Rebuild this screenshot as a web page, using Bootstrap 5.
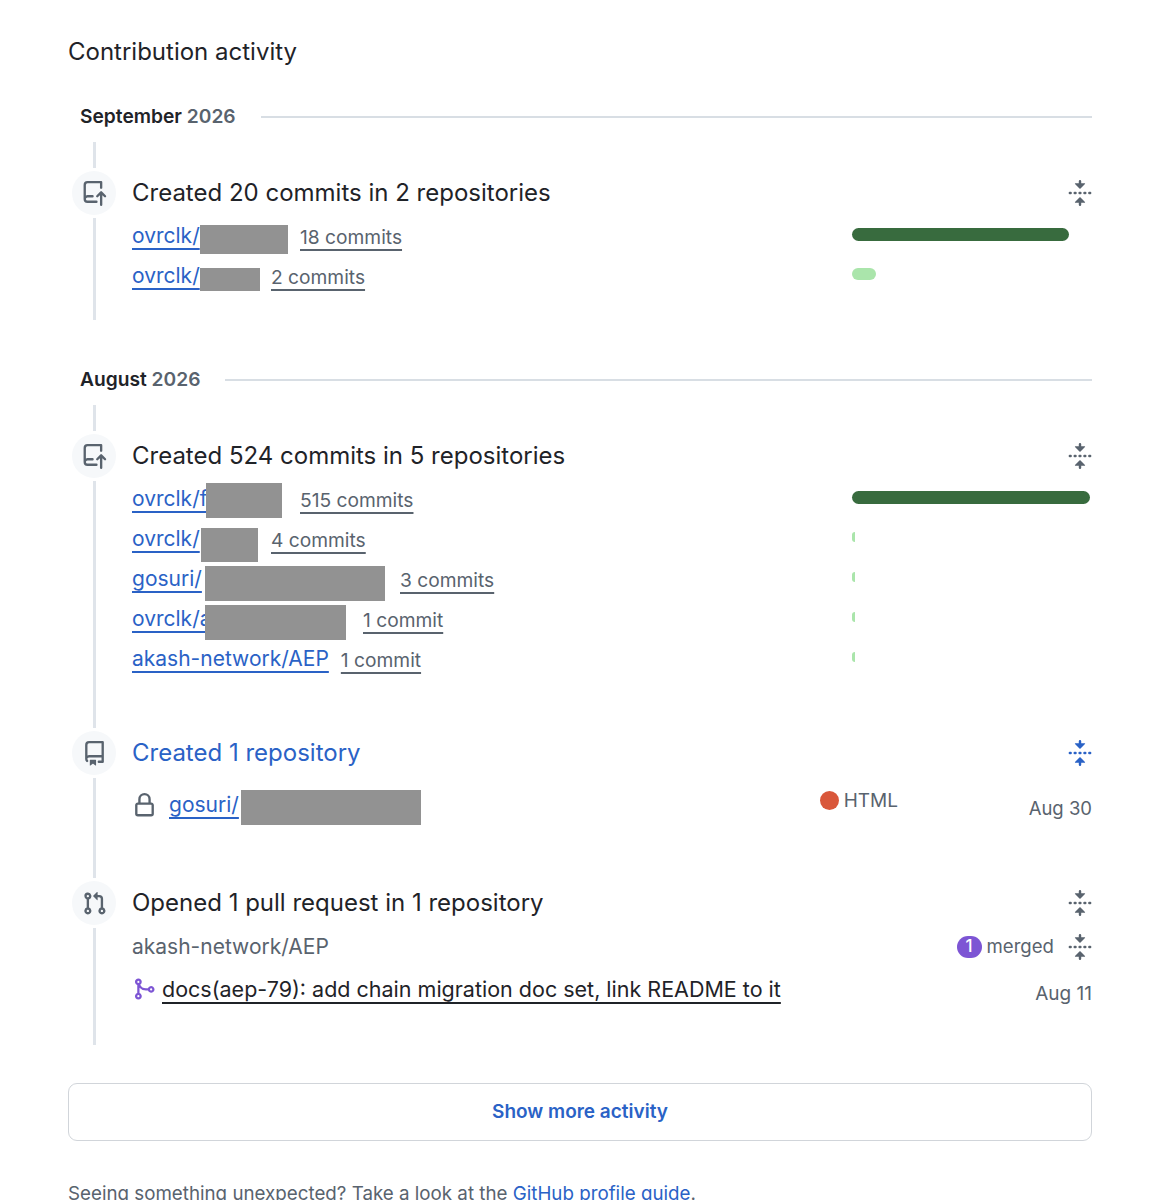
<!DOCTYPE html>
<html lang="en">
<head>
  <meta charset="UTF-8" />
  <title>Contribution activity</title>
  <link href="https://cdn.jsdelivr.net/npm/bootstrap@5.3.3/dist/css/bootstrap.min.css" rel="stylesheet">
  <style>
    html, body { height: 1200px; overflow: hidden; }
    body { font-family: Inter, "Liberation Sans", sans-serif; color: #1f2328; background: #fff; }
    a { color: #2a62c6; text-underline-offset: 5px; text-decoration-thickness: 1.5px; text-decoration-skip-ink: none; }
    .page-wrap { padding: 33px 58px 0 68px; }
    .page-title { font-size: 24px; font-weight: 400; line-height: 38px; margin: 0; }
    .month-head { height: 28px; margin: 31px 0 12px; padding: 1px 0 0 12px; font-size: 19.2px; font-weight: 600; }
    .month-head.later { margin-top: 45px; }
    .month-head .year { color: #59636e; }
    .month-head .rule { height: 2px; background: #d8dee4; margin-left: 25px; }
    .rail { width: 44px; margin: 0 16px 0 4px; }
    .rail-seg { width: 3px; background: #dfe4ea; }
    .rail-seg.top { height: 26px; }
    .rail-dot { width: 44px; height: 44px; margin: 3px 0; background: #f6f8fa; color: #59636e; }
    .rail-dot svg { width: 25px; height: 25px; }
    .entry-body { min-width: 0; }
    .entry-pad-a { padding: 29px 0 23px; }
    .entry-pad-b { padding: 29px 0 48px; }
    .entry-pad-c { padding: 3px 0 53px; }
    .entry-pad-d { padding: 3px 0 34px; }
    .entry-title { height: 44px; margin-bottom: 2px; font-size: 24px; }
    .entry-title a { text-decoration: none; }
    .fold-icon { width: 26px; height: 26px; margin-right: -1px; color: #59636e; flex: none; }
    .fold-icon.blue { color: #2a62c6; }
    .commit-row { height: 40px; font-size: 21px; }
    .repo-name { display: inline-block; white-space: nowrap; line-height: 32px; margin-bottom: 2px; flex: none; }
    .commit-count { color: #59636e; font-size: 19.2px; text-decoration-color: #59636e; margin-top: 1px; }
    .redact { background: #929292; flex: none; }
    .bar-col { width: 240px; }
    .bar-dark, .bar-light { border-radius: 7px; margin-bottom: 6px; }
    .bar-dark { height: 13px; background: #386b3e; }
    .bar-light { height: 12px; background: #aae5ab; }
    .bar-tiny { height: 10px; background: #aae5ab; border-radius: 5px 0 0 5px; margin-bottom: 6px; }
    .repo-row { height: 35px; margin-top: 15px; font-size: 21px; }
    .lock-icon { width: 25px; height: 25px; color: #59636e; margin: 0 12px 4px 0; flex: none; }
    .lang-col { width: 209px; color: #59636e; font-size: 19px; margin-bottom: 12px; }
    .lang-dot { width: 19px; height: 19px; background: #d9573a; margin: 0 5px 2px 0; }
    .when { color: #59636e; font-size: 18.5px; white-space: nowrap; margin-top: 2px; }
    .pr-repo { height: 40px; margin-top: 1px; color: #59636e; font-size: 21px; }
    .merged-pill { width: 25px; height: 22px; background: #7d55d4; color: #fff; font-size: 17px; font-weight: 500; margin-right: 5px; }
    .merged-txt { color: #59636e; font-size: 18.6px; margin-right: 13px; }
    .pr-row { height: 44px; font-size: 21.5px; }
    .pr-row a { color: #1f2328; text-decoration-color: #1f2328; }
    .pr-row .when { margin-top: 10px; font-size: 19px; }
    .merge-icon { width: 24px; height: 24px; color: #7d55d4; margin: 0 6px 0 0; flex: none; }
    .more-btn { height: 58px; margin-top: 38px; border: 1.5px solid #d1d5da; border-radius: 9px; color: #2a62c6; font-size: 19px; font-weight: 600; background: #fff; }
    .foot-note { margin-top: 41px; color: #59636e; font-size: 18.75px; line-height: 24px; }
    .foot-note a { text-decoration: none; }
  </style>
</head>
<body>

<svg width="0" height="0" class="d-block">
  <symbol id="i-fold" viewBox="0 0 16 16"><path fill="currentColor" d="M10.896 2H8.75V.75a.75.75 0 0 0-1.5 0V2H5.104a.25.25 0 0 0-.177.427l2.896 2.896a.25.25 0 0 0 .354 0l2.896-2.896A.25.25 0 0 0 10.896 2ZM8.75 15.25a.75.75 0 0 1-1.5 0V14H5.104a.25.25 0 0 1-.177-.427l2.896-2.896a.25.25 0 0 1 .354 0l2.896 2.896a.25.25 0 0 1-.177.427H8.75v1.25Zm-6.5-6.5a.75.75 0 0 0 0-1.5h-.5a.75.75 0 0 0 0 1.5h.5ZM6 8a.75.75 0 0 1-.75.75h-.5a.75.75 0 0 1 0-1.5h.5A.75.75 0 0 1 6 8Zm2.25.75a.75.75 0 0 0 0-1.5h-.5a.75.75 0 0 0 0 1.5h.5ZM12 8a.75.75 0 0 1-.75.75h-.5a.75.75 0 0 1 0-1.5h.5A.75.75 0 0 1 12 8Zm2.25.75a.75.75 0 0 0 0-1.5h-.5a.75.75 0 0 0 0 1.5h.5Z"/></symbol>
  <symbol id="i-push" viewBox="0 0 16 16"><path fill="currentColor" d="M1 2.5A2.5 2.5 0 0 1 3.5 0h8.75a.75.75 0 0 1 .75.75v3.5a.75.75 0 0 1-1.5 0V1.5h-8a1 1 0 0 0-1 1v6.708A2.493 2.493 0 0 1 3.5 9h3.25a.75.75 0 0 1 0 1.5H3.5a1 1 0 0 0 0 2h5.75a.75.75 0 0 1 0 1.5H3.5A2.5 2.5 0 0 1 1 11.5Zm13.23 7.79h-.001l-1.224-1.224v6.184a.75.75 0 0 1-1.5 0V9.066L10.28 10.29a.75.75 0 0 1-1.06-1.061l2.505-2.504a.75.75 0 0 1 1.06 0L15.29 9.23a.751.751 0 0 1-.018 1.042.751.751 0 0 1-1.042.018Z"/></symbol>
  <symbol id="i-repo" viewBox="0 0 16 16"><path fill="currentColor" d="M2 2.5A2.5 2.5 0 0 1 4.5 0h8.75a.75.75 0 0 1 .75.75v12.5a.75.75 0 0 1-.75.75h-2.5a.75.75 0 0 1 0-1.5h1.75v-2h-8a1 1 0 0 0-.714 1.7.75.75 0 1 1-1.072 1.05A2.495 2.495 0 0 1 2 11.5Zm10.5-1h-8a1 1 0 0 0-1 1v6.708A2.486 2.486 0 0 1 4.5 9h8ZM5 12.25a.25.25 0 0 1 .25-.25h3.5a.25.25 0 0 1 .25.25v3.25a.25.25 0 0 1-.4.2l-1.45-1.087a.249.249 0 0 0-.3 0L5.4 15.7a.25.25 0 0 1-.4-.2Z"/></symbol>
  <symbol id="i-pr" viewBox="0 0 16 16"><path fill="currentColor" d="M1.5 3.25a2.25 2.25 0 1 1 3 2.122v5.256a2.251 2.251 0 1 1-1.5 0V5.372A2.25 2.25 0 0 1 1.5 3.25Zm5.677-.177L9.573.677A.25.25 0 0 1 10 .854V2.5h1A2.5 2.5 0 0 1 13.5 5v5.628a2.251 2.251 0 1 1-1.5 0V5a1 1 0 0 0-1-1h-1v1.646a.25.25 0 0 1-.427.177L7.177 3.427a.25.25 0 0 1 0-.354ZM3.75 2.5a.75.75 0 1 0 0 1.5.75.75 0 0 0 0-1.5Zm0 9.5a.75.75 0 1 0 0 1.5.75.75 0 0 0 0-1.5Zm8.25.75a.75.75 0 1 0 1.5 0 .75.75 0 0 0-1.5 0Z"/></symbol>
  <symbol id="i-lock" viewBox="0 0 16 16"><path fill="currentColor" d="M4 4a4 4 0 0 1 8 0v2h.25c.966 0 1.75.784 1.75 1.75v5.5A1.75 1.75 0 0 1 12.25 15h-8.5A1.75 1.75 0 0 1 2 13.25v-5.5C2 6.784 2.784 6 3.75 6H4Zm8.25 3.5h-8.5a.25.25 0 0 0-.25.25v5.5c0 .138.112.25.25.25h8.5a.25.25 0 0 0 .25-.25v-5.5a.25.25 0 0 0-.25-.25ZM10.5 6V4a2.5 2.5 0 1 0-5 0v2Z"/></symbol>
  <symbol id="i-merge" viewBox="0 0 16 16"><path fill="currentColor" d="M5.45 5.154A4.25 4.25 0 0 0 9.25 7.5h1.378a2.251 2.251 0 1 1 0 1.5H9.25A5.734 5.734 0 0 1 5 7.123v3.505a2.25 2.25 0 1 1-1.5 0V5.372a2.25 2.25 0 1 1 1.95-.218ZM4.25 13.5a.75.75 0 1 0 0-1.5.75.75 0 0 0 0 1.5Zm8.5-4.5a.75.75 0 1 0 0-1.5.75.75 0 0 0 0 1.5ZM5 3.25a.75.75 0 1 0 0 .005V3.25Z"/></symbol>
</svg>

<div class="page-wrap">
  <h2 class="page-title">Contribution activity</h2>

  <div class="month-head d-flex align-items-center">
    <span>September <span class="year">2026</span></span>
    <div class="rule flex-grow-1"></div>
  </div>

  <div class="d-flex">
    <div class="rail d-flex flex-column align-items-center flex-shrink-0">
      <div class="rail-seg top"></div>
      <div class="rail-dot rounded-circle d-flex align-items-center justify-content-center"><svg><use href="#i-push"/></svg></div>
      <div class="rail-seg flex-grow-1"></div>
    </div>
    <div class="entry-body flex-grow-1 entry-pad-a">
      <div class="entry-title d-flex align-items-center justify-content-between">
        <span>Created 20 commits in 2 repositories</span>
        <svg class="fold-icon"><use href="#i-fold"/></svg>
      </div>
      <div class="commit-row d-flex align-items-center">
        <a class="repo-name" href="#" style="width:64px">ovrclk/</a>
        <div class="redact" style="width:88px;height:29px;margin:5px 12px 0 4px"></div>
        <a class="commit-count" href="#">18 commits</a>
        <div class="bar-col ms-auto"><div class="bar-dark" style="width:217px"></div></div>
      </div>
      <div class="commit-row d-flex align-items-center">
        <a class="repo-name" href="#" style="width:64px">ovrclk/</a>
        <div class="redact" style="width:60px;height:23px;margin:5px 11px 0 4px"></div>
        <a class="commit-count" href="#">2 commits</a>
        <div class="bar-col ms-auto"><div class="bar-light" style="width:24px"></div></div>
      </div>
    </div>
  </div>

  <div class="month-head later d-flex align-items-center">
    <span>August <span class="year">2026</span></span>
    <div class="rule flex-grow-1"></div>
  </div>

  <div class="d-flex">
    <div class="rail d-flex flex-column align-items-center flex-shrink-0">
      <div class="rail-seg top"></div>
      <div class="rail-dot rounded-circle d-flex align-items-center justify-content-center"><svg><use href="#i-push"/></svg></div>
      <div class="rail-seg flex-grow-1"></div>
    </div>
    <div class="entry-body flex-grow-1 entry-pad-b">
      <div class="entry-title d-flex align-items-center justify-content-between">
        <span>Created 524 commits in 5 repositories</span>
        <svg class="fold-icon"><use href="#i-fold"/></svg>
      </div>
      <div class="commit-row d-flex align-items-center">
        <a class="repo-name" href="#" style="width:70px">ovrclk/f</a>
        <div class="redact" style="width:76px;height:35px;margin:0 18px 0 4px"></div>
        <a class="commit-count" href="#">515 commits</a>
        <div class="bar-col ms-auto"><div class="bar-dark" style="width:238px"></div></div>
      </div>
      <div class="commit-row d-flex align-items-center">
        <a class="repo-name" href="#" style="width:66px">ovrclk/</a>
        <div class="redact" style="width:57px;height:34px;margin:10px 13px 0 3px"></div>
        <a class="commit-count" href="#">4 commits</a>
        <div class="bar-col ms-auto"><div class="bar-tiny" style="width:3px"></div></div>
      </div>
      <div class="commit-row d-flex align-items-center">
        <a class="repo-name" href="#" style="width:69px">gosuri/</a>
        <div class="redact" style="width:180px;height:35px;margin:7px 15px 0 4px"></div>
        <a class="commit-count" href="#">3 commits</a>
        <div class="bar-col ms-auto"><div class="bar-tiny" style="width:3px"></div></div>
      </div>
      <div class="commit-row d-flex align-items-center">
        <a class="repo-name" href="#" style="width:69px">ovrclk/a</a>
        <div class="redact" style="width:141px;height:35px;margin:5px 17px 0 4px"></div>
        <a class="commit-count" href="#">1 commit</a>
        <div class="bar-col ms-auto"><div class="bar-tiny" style="width:3px"></div></div>
      </div>
      <div class="commit-row d-flex align-items-center">
        <a class="repo-name" href="#" style="margin-right:12px">akash-network/AEP</a>
        <a class="commit-count" href="#">1 commit</a>
        <div class="bar-col ms-auto"><div class="bar-tiny" style="width:3px"></div></div>
      </div>
    </div>
  </div>

  <div class="d-flex">
    <div class="rail d-flex flex-column align-items-center flex-shrink-0">
      <div class="rail-dot rounded-circle d-flex align-items-center justify-content-center"><svg><use href="#i-repo"/></svg></div>
      <div class="rail-seg flex-grow-1"></div>
    </div>
    <div class="entry-body flex-grow-1 entry-pad-c">
      <div class="entry-title d-flex align-items-center justify-content-between">
        <a href="#">Created 1 repository</a>
        <svg class="fold-icon blue"><use href="#i-fold"/></svg>
      </div>
      <div class="repo-row d-flex align-items-center">
        <svg class="lock-icon"><use href="#i-lock"/></svg>
        <a class="repo-name" href="#" style="width:68px;margin-bottom:6px">gosuri/</a>
        <div class="redact" style="width:180px;height:35px;margin-left:4px"></div>
        <div class="lang-col d-flex align-items-center ms-auto">
          <span class="lang-dot rounded-circle"></span>HTML
        </div>
        <span class="when">Aug 30</span>
      </div>
    </div>
  </div>

  <div class="d-flex">
    <div class="rail d-flex flex-column align-items-center flex-shrink-0">
      <div class="rail-dot rounded-circle d-flex align-items-center justify-content-center"><svg><use href="#i-pr"/></svg></div>
      <div class="rail-seg flex-grow-1"></div>
    </div>
    <div class="entry-body flex-grow-1 entry-pad-d">
      <div class="entry-title d-flex align-items-center justify-content-between">
        <span>Opened 1 pull request in 1 repository</span>
        <svg class="fold-icon"><use href="#i-fold"/></svg>
      </div>
      <div class="pr-repo d-flex align-items-center">
        <span>akash-network/AEP</span>
        <span class="merged-pill rounded-pill d-flex align-items-center justify-content-center ms-auto">1</span>
        <span class="merged-txt">merged</span>
        <svg class="fold-icon"><use href="#i-fold"/></svg>
      </div>
      <div class="pr-row d-flex align-items-center">
        <svg class="merge-icon"><use href="#i-merge"/></svg>
        <a href="#">docs(aep-79): add chain migration doc set, link README to it</a>
        <span class="when ms-auto">Aug 11</span>
      </div>
    </div>
  </div>

  <button class="more-btn w-100 d-block" type="button">Show more activity</button>

  <p class="foot-note">Seeing something unexpected? Take a look at the <a href="#">GitHub profile guide</a>.</p>
</div>

</body>
</html>
